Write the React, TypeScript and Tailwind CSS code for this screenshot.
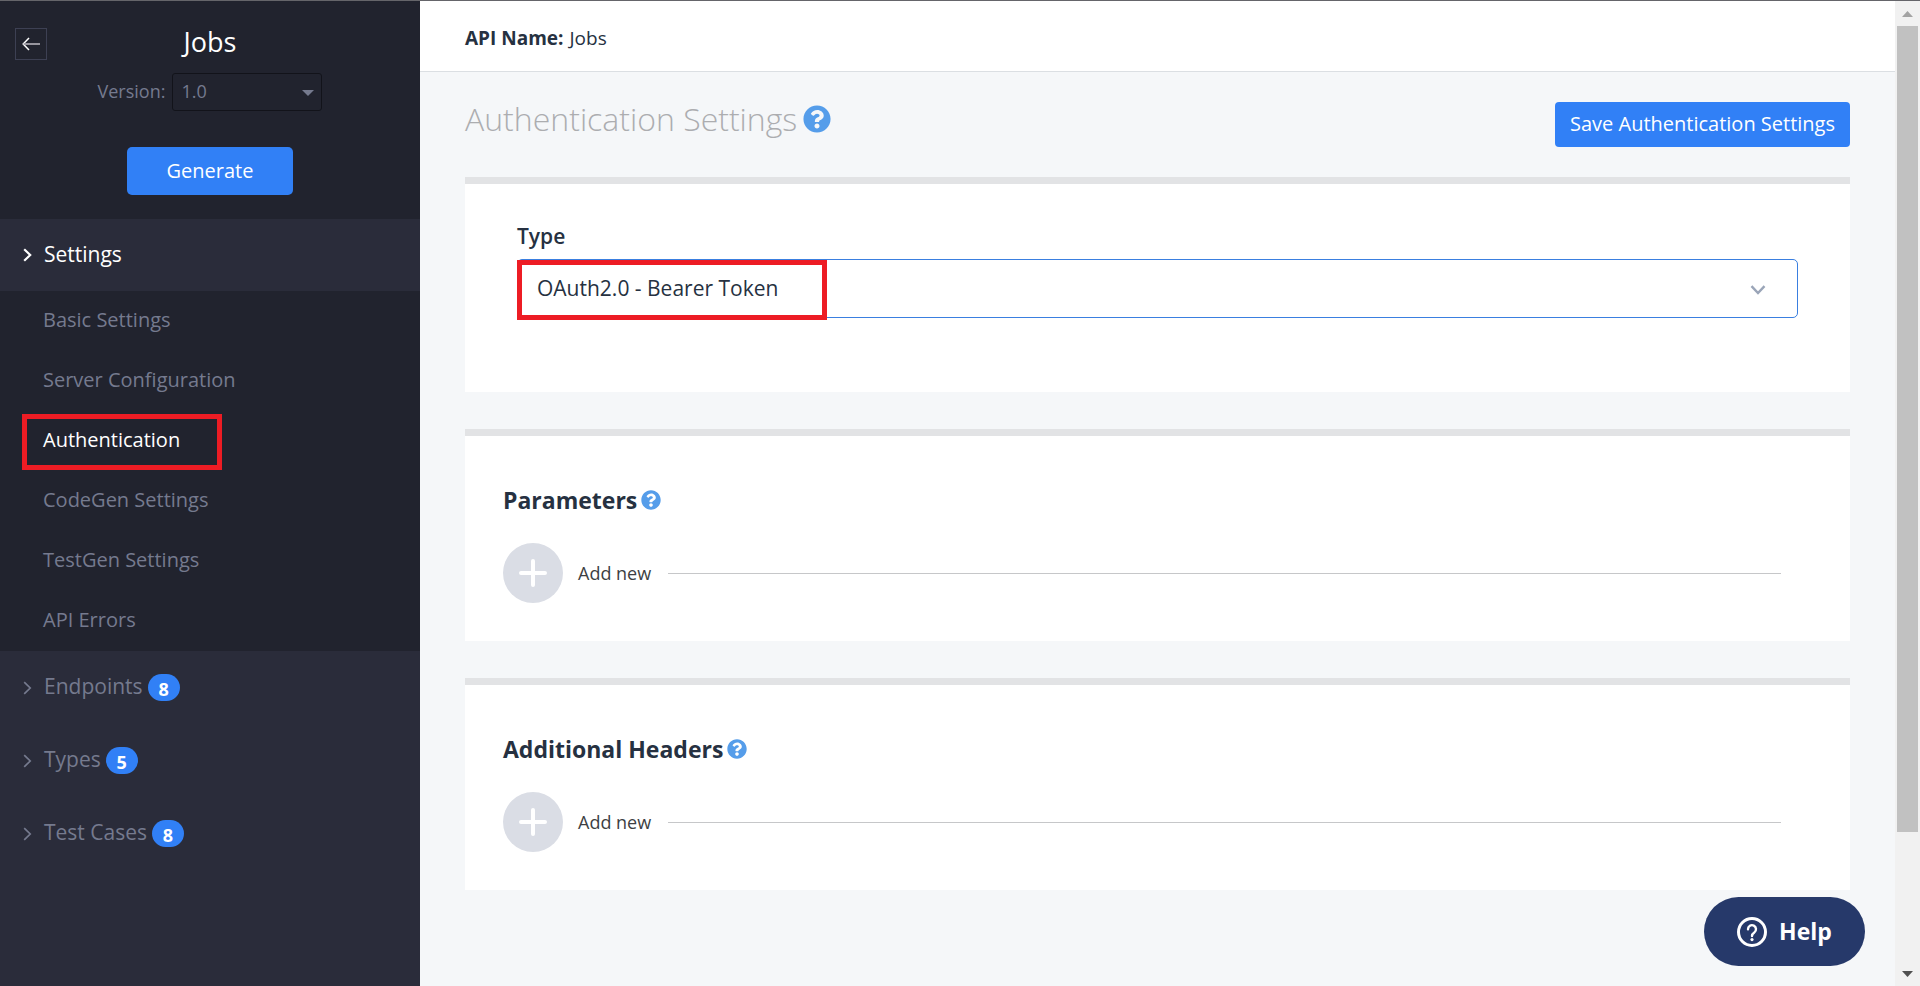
import { FaQuestionCircle } from "react-icons/fa";

const subItems = [
  { label: "Basic Settings" },
  { label: "Server Configuration" },
  { label: "Authentication", active: true },
  { label: "CodeGen Settings" },
  { label: "TestGen Settings" },
  { label: "API Errors" },
];

const groups = [
  { label: "Endpoints", count: 8 },
  { label: "Types", count: 5 },
  { label: "Test Cases", count: 8 },
];

function Chevron({ bold = false }: { bold?: boolean }) {
  return (
    <svg viewBox="0 0 9 14" className="h-3.5 w-[9px] shrink-0" fill="none" stroke="currentColor" strokeWidth={bold ? 2.2 : 1.7} aria-hidden="true">
      <path d="M1.2 1.2 7.2 7l-6 5.8" />
    </svg>
  );
}

function Sidebar() {
  return (
    <aside className="flex w-[420px] shrink-0 flex-col bg-[#2a2c3a] text-[#757a8e]">
      <div className="relative flex h-[218px] flex-col items-center bg-[#21232e] pt-5">
        <button type="button" aria-label="Back" className="absolute top-[27px] left-[15px] flex size-8 items-center justify-center border border-[#3d4053] text-white">
          <svg viewBox="0 0 18 14" className="h-3.5 w-[18px]" fill="none" stroke="currentColor" aria-hidden="true">
            <path d="M7 1 1.2 7 7 13" strokeWidth="1.5" />
            <path d="M1.5 7H18" strokeWidth="1.8" stroke="#a5a3ac" />
          </svg>
        </button>
        <h1 className="text-[27px] leading-[42px] text-white">Jobs</h1>
        <div className="mt-2.5 flex items-center gap-[7px] text-lg">
          <label htmlFor="version" className="pb-0.5">Version:</label>
          <div className="relative">
            <select id="version" className="h-[38px] w-[150px] appearance-none rounded-[3px] border border-[#12131a] bg-transparent pb-0.5 pl-2 text-lg">
              <option>1.0</option>
            </select>
            <svg viewBox="0 0 12 6" className="pointer-events-none absolute top-[17px] right-2 h-1.5 w-3" fill="currentColor" aria-hidden="true">
              <path d="M0 0h12L6 6z" />
            </svg>
          </div>
        </div>
        <button type="button" className="mt-9 h-12 w-[166px] rounded-[5px] bg-[#3180f6] text-[20px] text-white">
          Generate
        </button>
      </div>
      <nav>
        <a href="#settings" className="flex h-[72px] items-center gap-3 pl-[23px] text-[21px] text-white">
          <Chevron bold />
          Settings
        </a>
        <ul className="bg-[#21232e]">
          {subItems.map((item) => (
            <li key={item.label} className="relative">
              <a
                href="#item"
                className={
                  item.active
                    ? "flex h-[60px] items-center pb-0.5 pl-[43px] text-[20px] text-white"
                    : "flex h-[60px] items-center pb-0.5 pl-[43px] text-[20px]"
                }
              >
                {item.label}
              </a>
              {item.active && <span className="pointer-events-none absolute top-[3px] left-[22px] h-14 w-[200px] border-5 border-[#ed1c24]" />}
            </li>
          ))}
        </ul>
        {groups.map((g) => (
          <a key={g.label} href="#group" className="flex h-[73px] items-center pl-[23px] text-[21px]">
            <Chevron />
            <span className="ml-3 pb-0.5">{g.label}</span>
            <span className="ml-[5px] flex h-[27px] w-8 items-center justify-center rounded-full bg-[#3180f6] pt-0.5 text-lg font-bold text-white">
              {g.count}
            </span>
          </a>
        ))}
      </nav>
    </aside>
  );
}

function AddCard({ title }: { title: string }) {
  return (
    <section className="border-t-7 border-[#e2e3e5] bg-white px-[38px] pt-12 pb-[38px]">
      <h3 className="flex items-center gap-1 text-[23px] leading-8 font-bold text-[#263141]">
        {title}
        <FaQuestionCircle className="size-5 text-[#559dea]" />
      </h3>
      <div className="mt-[27px] flex items-center pr-[31px]">
        <button type="button" className="flex items-center gap-[15px] text-lg text-[#3d3f43]">
          <span className="flex size-[60px] items-center justify-center rounded-full bg-[#dadde5]">
            <svg viewBox="0 0 28 28" className="size-7" stroke="#fff" strokeWidth="4" strokeLinecap="round" aria-hidden="true">
              <path d="M14 2v24M2 14h24" />
            </svg>
          </span>
          Add new
        </button>
        <span className="ml-[17px] h-px flex-1 bg-[#c6c7c9]" />
      </div>
    </section>
  );
}

function ScrollTrack() {
  return (
    <div className="flex w-[25px] shrink-0 flex-col items-center bg-[#f1f1f1]" aria-hidden="true">
      <div className="flex h-[25px] items-center justify-center">
        <svg viewBox="0 0 11 6" className="h-1.5 w-[11px]" fill="#a3a3a3">
          <path d="M5.500 0 11 6H0z" />
        </svg>
      </div>
      <div className="w-[21px] grow-[806] bg-[#c1c1c1]" />
      <div className="grow-[129]" />
      <div className="flex h-[25px] items-center justify-center">
        <svg viewBox="0 0 11 6" className="h-1.5 w-[11px]" fill="#505050">
          <path d="M0 0h11L5.500 6z" />
        </svg>
      </div>
    </div>
  );
}

export default function App() {
  return (
    <div className="flex min-h-screen border-t border-[#65656a] bg-[#f5f7f9] font-['Open_Sans','Noto_Sans',sans-serif] text-[#263141]">
      <Sidebar />
      <main className="min-w-0 flex-1">
        <header className="flex h-[71px] items-center border-b border-[#dbdfe3] bg-white px-[45px] pt-1 text-[19px]">
          <strong className="mr-1.5 font-bold">API Name:</strong>Jobs
        </header>
        <div className="px-[45px] pt-[30px] pb-10">
          <div className="mb-[30px] flex h-[45px] items-center justify-between">
            <h2 className="flex items-center gap-1.5 pb-3 text-[32px] leading-10 font-light text-[#acadb0]">
              Authentication Settings
              <FaQuestionCircle className="size-7 text-[#559dea]" />
            </h2>
            <button type="button" className="h-[45px] rounded-[4px] bg-[#3180f6] px-[15px] pb-0.5 text-[20px] text-white">
              Save Authentication Settings
            </button>
          </div>
          <div className="flex flex-col gap-[37px]">
            <section className="border-t-7 border-[#e2e3e5] bg-white px-[52px] pt-9 pb-[74px]">
              <label htmlFor="type" className="block pb-[7px] text-[21px] leading-8 font-semibold">
                Type
              </label>
              <div className="relative">
                <select id="type" className="block h-[59px] w-full appearance-none rounded-[5px] border border-[#3a7fe0] bg-white px-[19px] text-[21px]">
                  <option>OAuth2.0 - Bearer Token</option>
                </select>
                <span className="pointer-events-none absolute top-px left-0 h-[60px] w-[310px] border-5 border-[#ed1c24]" />
                <svg viewBox="0 0 16 10" className="pointer-events-none absolute top-[26px] right-8 h-2.5 w-4" fill="none" stroke="#9aa5b8" strokeWidth="2.4" aria-hidden="true">
                  <path d="M1.500 1.200 8 8l6.500-6.800" />
                </svg>
              </div>
            </section>
            <AddCard title="Parameters" />
            <AddCard title="Additional Headers" />
          </div>
        </div>
      </main>
      <ScrollTrack />
      <button type="button" className="fixed right-[55px] bottom-5 flex h-[69px] w-[161px] items-center justify-center gap-3 rounded-full bg-[#26396a] text-[23px] font-bold text-white">
        <svg viewBox="0 0 30 30" className="size-[30px]" fill="none" stroke="currentColor" aria-hidden="true">
          <circle cx="15" cy="15" r="13.500" strokeWidth="3" />
          <path d="M11 12.200a4 4 0 1 1 6.300 3.200c-1.500 1-2.300 1.700-2.300 3.600" strokeWidth="2.400" strokeLinecap="round" />
          <circle cx="15" cy="22.600" r="1.600" fill="currentColor" stroke="none" />
        </svg>
        Help
      </button>
    </div>
  );
}
